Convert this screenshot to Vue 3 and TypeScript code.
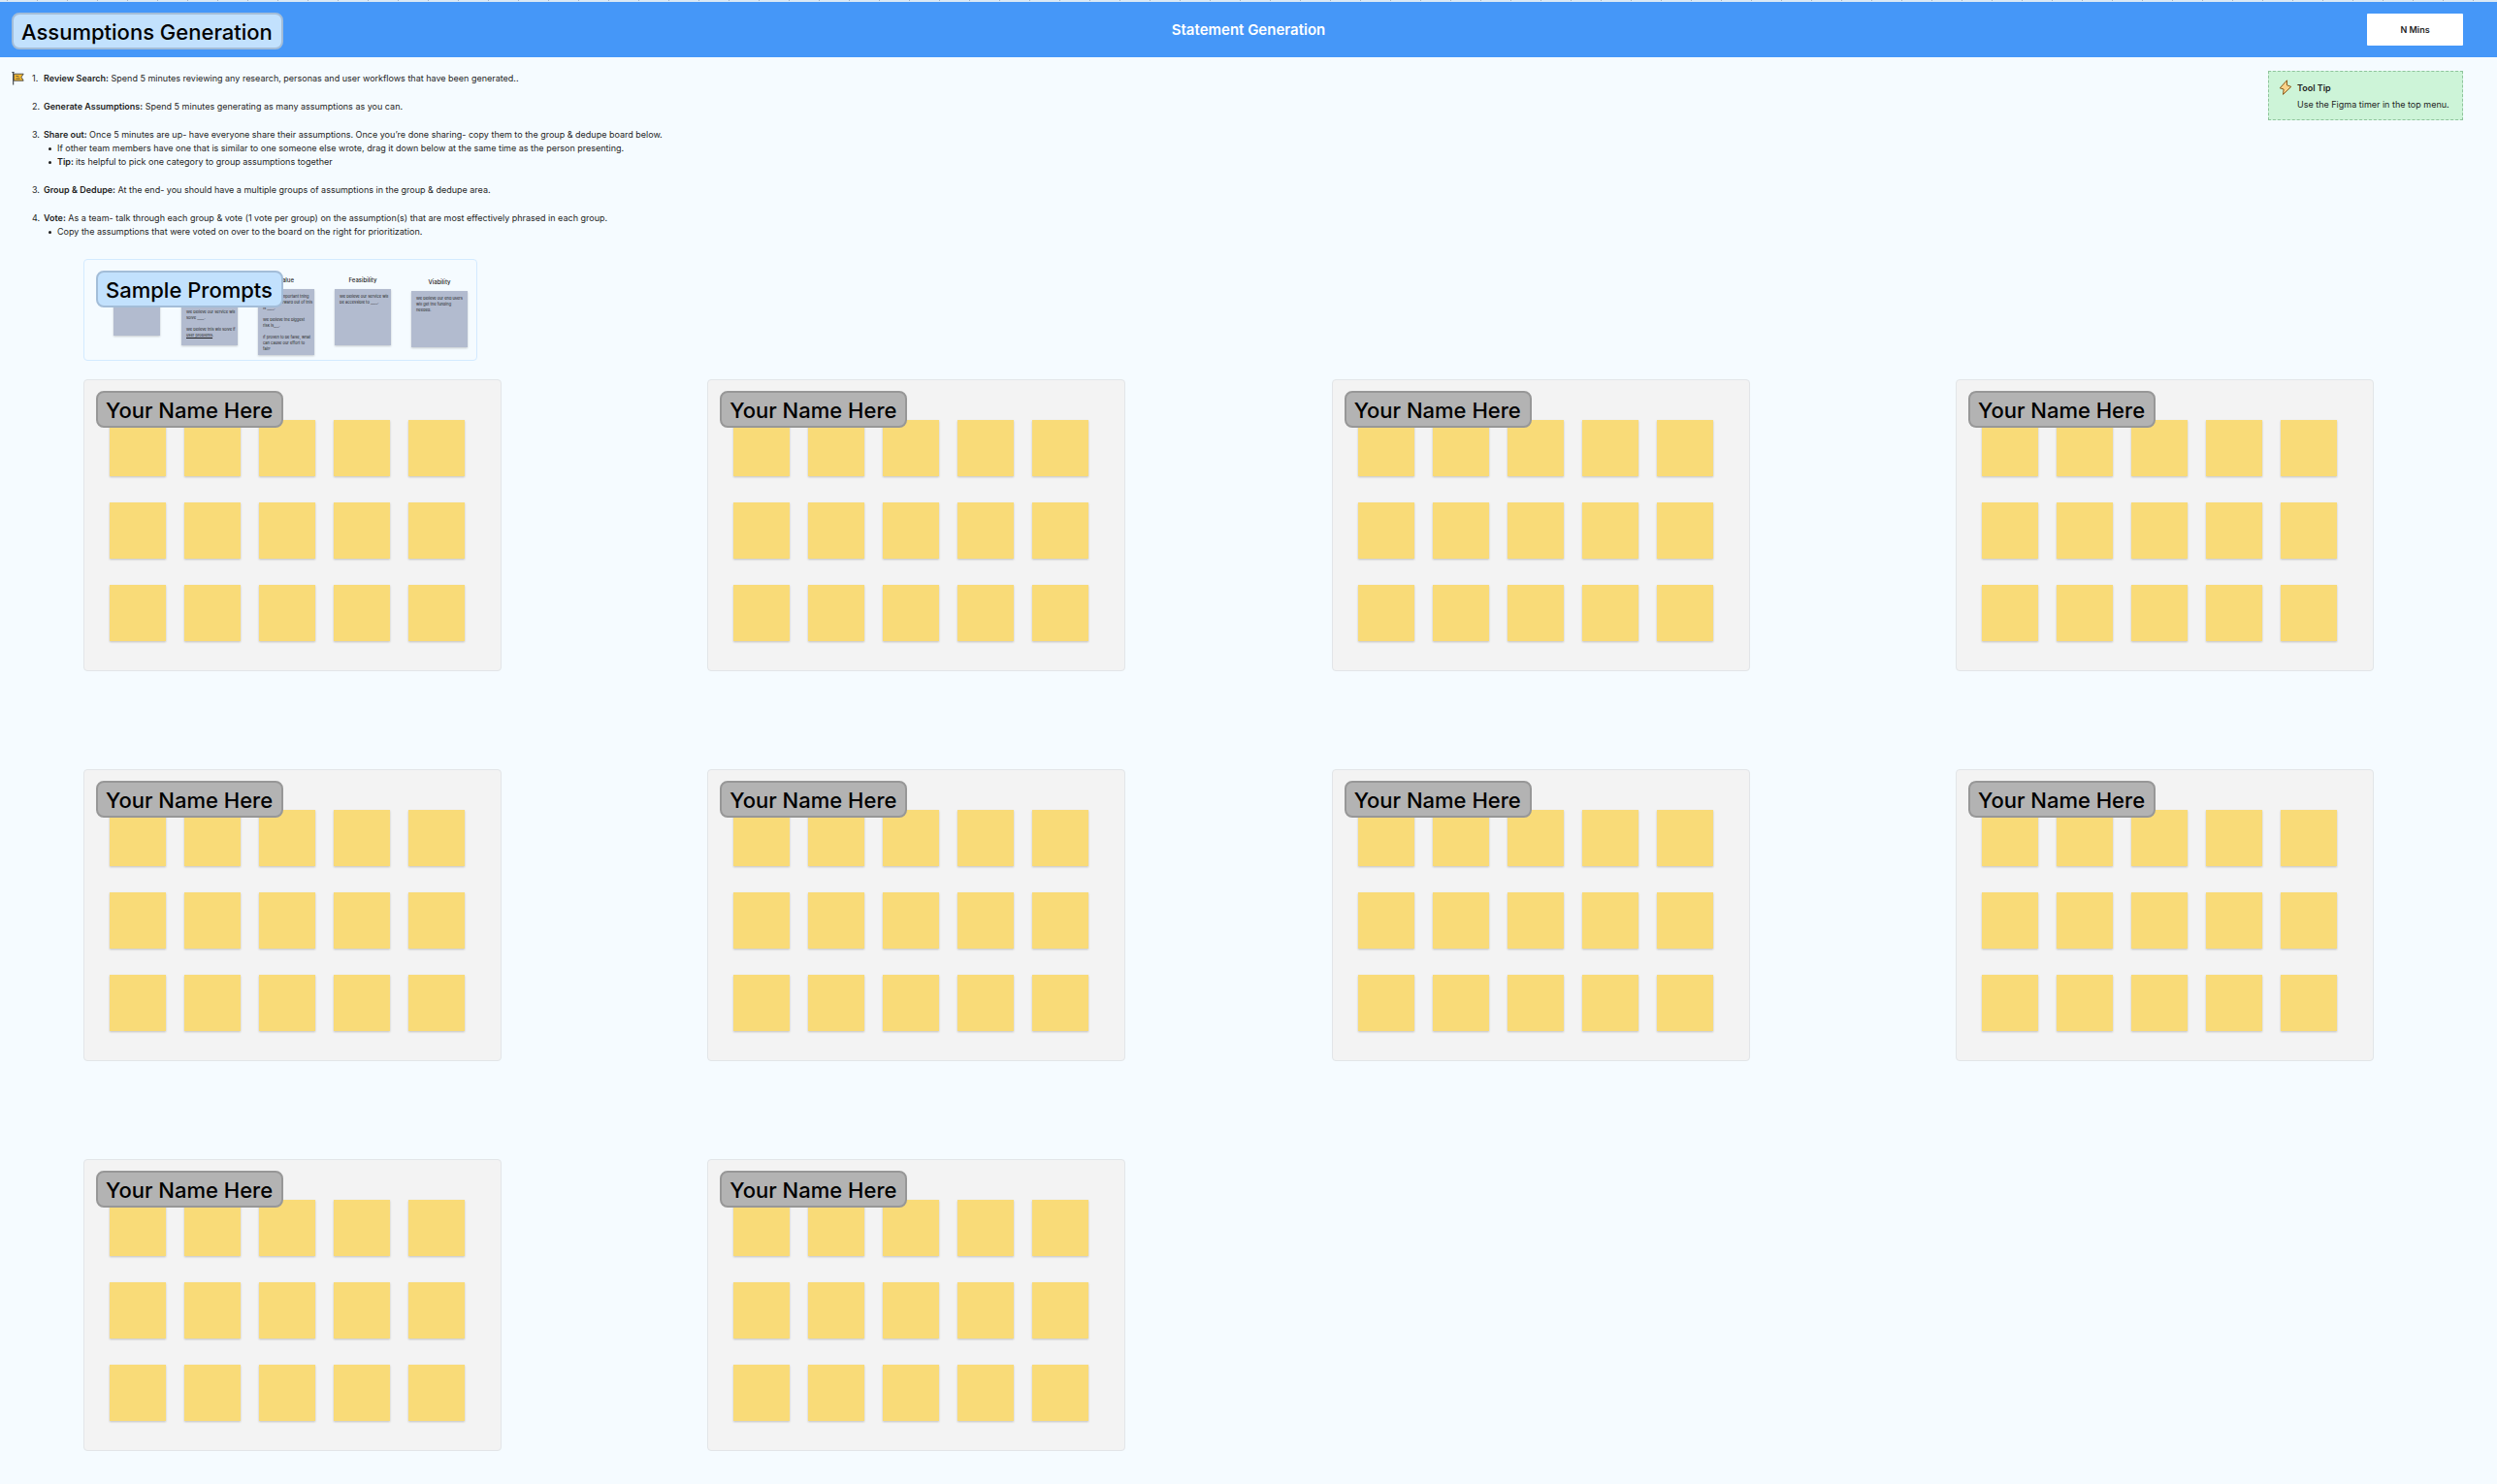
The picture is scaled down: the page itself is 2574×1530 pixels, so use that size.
<script setup lang="ts">
interface Instruction {
  marker: string
  title: string
  text: string
  points: { lead?: string; text: string }[]
}

interface Prompt {
  key: string
  label: string
  lines: string[]
  underlined?: string
}

const instructions: Instruction[] = [
  {
    marker: '1.',
    title: 'Review Search:',
    text: 'Spend 5 minutes reviewing any research, personas and user workflows that have been generated..',
    points: [],
  },
  {
    marker: '2.',
    title: 'Generate Assumptions:',
    text: 'Spend 5 minutes generating as many assumptions as you can.',
    points: [],
  },
  {
    marker: '3.',
    title: 'Share out:',
    text: 'Once 5 minutes are up- have everyone share their assumptions. Once you’re done sharing- copy them to the group & dedupe board below.',
    points: [
      {
        text: 'If other team members have one that is similar to one someone else wrote, drag it down below at the same time as the person presenting.',
      },
      { lead: 'Tip:', text: 'its helpful to pick one category to group assumptions together' },
    ],
  },
  {
    marker: '3.',
    title: 'Group & Dedupe:',
    text: 'At the end- you should have a multiple groups of assumptions in the group & dedupe area.',
    points: [],
  },
  {
    marker: '4.',
    title: 'Vote:',
    text: 'As a team- talk through each group & vote (1 vote per group) on the assumption(s) that are most effectively phrased in each group.',
    points: [
      { text: 'Copy the assumptions that were voted on over to the board on the right for prioritization.' },
    ],
  },
]

const prompts: Prompt[] = [
  { key: 'small', label: '', lines: [] },
  {
    key: 'solve',
    label: '',
    lines: ['We believe our service will', 'solve ____.', '', 'We believe this will solve if'],
    underlined: 'user problems',
  },
  {
    key: 'value',
    label: 'Value',
    lines: [
      'The most important thing',
      'to move forward out of this',
      'is ____.',
      '',
      'We believe the biggest',
      'risk is___.',
      '',
      'If proven to be false, what',
      'can cause our effort to',
      'fail?',
    ],
  },
  {
    key: 'feasibility',
    label: 'Feasibility',
    lines: ['We believe our service will', 'be accessible to ____.'],
  },
  {
    key: 'viability',
    label: 'Viability',
    lines: ['We believe our end users', 'will get the funding', 'needed.'],
  },
]

const boardCount = 10
const notesPerBoard = 15
</script>

<template>
  <div class="canvas">
    <header class="bar">
      <h1 class="chip chip-blue">Assumptions Generation</h1>
      <h2 class="bar-title">Statement Generation</h2>
      <button type="button" class="timer">N Mins</button>
    </header>

    <section class="intro">
      <svg class="flag" viewBox="0 0 12 14" aria-hidden="true">
        <path d="M2 3h9.300l-2 3 2 3.500H2z" fill="#f6b92f" stroke="#3a3d42" stroke-width=".8" />
        <path d="M1.500 1v12.500" stroke="#3a3d42" stroke-width="1" />
        <path d="M0 1.500h2.500M4 5l3 .5M4 7.500h4" stroke="#3a3d42" stroke-width=".7" fill="none" />
      </svg>
      <ol class="steps">
        <li v-for="(step, i) in instructions" :key="i" class="step">
          <span>{{ step.marker }}</span>
          <div>
            <p><strong>{{ step.title }}</strong> {{ step.text }}</p>
            <ul v-if="step.points.length" class="points">
              <li v-for="(point, j) in step.points" :key="j">
                <strong v-if="point.lead">{{ point.lead }}&nbsp;</strong>{{ point.text }}
              </li>
            </ul>
          </div>
        </li>
      </ol>
      <aside class="tip">
        <svg class="bolt" viewBox="0 0 14 16" aria-hidden="true">
          <path
            d="M8.500 .8 1.200 8.800l3.900 1.200L4.500 15.400l8.300-8-4.300-1.600z"
            fill="#fbd38a"
            stroke="#8a5a1c"
            stroke-width="1"
            stroke-linejoin="round"
          />
        </svg>
        <div>
          <h3>Tool Tip</h3>
          <p>Use the Figma timer in the top menu.</p>
        </div>
      </aside>
    </section>

    <section class="prompts">
      <h2 class="chip chip-blue chip-over">Sample Prompts</h2>
      <div v-for="prompt in prompts" :key="prompt.key" class="prompt" :class="prompt.key">
        <h3>{{ prompt.label }}</h3>
        <div class="prompt-note">
          <p v-for="(line, i) in prompt.lines" :key="i">{{ line }}</p>
          <p v-if="prompt.underlined"><u>{{ prompt.underlined }}</u>.</p>
        </div>
      </div>
    </section>

    <main class="boards">
      <section v-for="b in boardCount" :key="b" class="board">
        <h2 class="chip chip-gray chip-over">Your Name Here</h2>
        <div v-for="n in notesPerBoard" :key="n" class="note"></div>
      </section>
    </main>
  </div>
</template>

<style>
body {
  margin: 0;
  background: #f5fbff;
}
</style>

<style scoped>
.canvas {
  font-family: Inter, 'Liberation Sans', sans-serif;
  font-size: 9px;
  line-height: 14px;
  color: #1e1e1e;
  background: #f5fbff;
  padding-bottom: 35px;
}

h1,
h2,
h3,
p,
ol,
ul {
  margin: 0;
  padding: 0;
  list-style: none;
}

.chip {
  box-sizing: border-box;
  height: 38px;
  padding: 0 9px 0 8px;
  border: 2px solid;
  border-radius: 8px;
  font-size: 22px;
  font-weight: 500;
  line-height: 36px;
  white-space: nowrap;
  color: #000;
}

.chip-blue {
  background: #c2e1fd;
  border-color: #a3bdd8;
}

.chip-gray {
  background: #b3b3b3;
  border-color: #979797;
}

.chip-over {
  position: absolute;
  top: 11px;
  left: 12px;
}

.bar {
  display: grid;
  grid-template-columns: 1fr auto 1fr;
  align-items: center;
  height: 57px;
  padding: 2px 35px 0;
  background:
    repeating-linear-gradient(90deg, transparent 0 7px, #a9b4c0 7px 8px, transparent 8px 31px) top / 100% 1px no-repeat,
    linear-gradient(#dbe9f5 0 2px, #4597f8 2px);
}

.bar .chip {
  justify-self: start;
  margin: 3px 0 0 -23px;
}

.bar-title {
  font-size: 15px;
  font-weight: 600;
  line-height: 20px;
  color: #fff;
}

.timer {
  justify-self: end;
  width: 99px;
  height: 33px;
  border: 0;
  border-radius: 1px;
  background: #fff;
  color: #1e1e1e;
  font: 600 9px/14px Inter, sans-serif;
}

.intro {
  display: flex;
  align-items: flex-start;
  padding: 14px 35px 0 12px;
}

.flag {
  flex: none;
  width: 13px;
  height: 15px;
  margin-right: 8px;
}

.steps {
  flex: 1;
  display: flex;
  flex-direction: column;
  gap: 15px;
  padding-top: 1px;
}

.step {
  display: grid;
  grid-template-columns: 12px 1fr;
}

strong,
.tip h3 {
  font-weight: 600;
}

.points {
  padding-left: 14px;
}

.points li {
  position: relative;
}

.points li::before {
  content: '';
  position: absolute;
  left: -9px;
  top: 6px;
  width: 3px;
  height: 3px;
  border-radius: 50%;
  background: #1e1e1e;
}

.tip {
  display: flex;
  gap: 5px;
  box-sizing: border-box;
  width: 201px;
  height: 51px;
  padding: 8px 0 0 10px;
  border: 1px dashed #8fc49c;
  background: #cdf4d8;
  white-space: nowrap;
}

.tip h3 {
  font-size: 9px;
  line-height: 17px;
}

.tip p {
  line-height: 17px;
}

.bolt {
  flex: none;
  width: 14px;
  height: 16px;
}

.prompts {
  position: relative;
  display: flex;
  align-items: flex-start;
  box-sizing: border-box;
  width: 406px;
  height: 105px;
  margin: 21px 0 0 86px;
  padding: 16px 9px 0 30px;
  border: 1px solid #d3eaff;
  border-radius: 4px;
  gap: 21px;
}

.prompt {
  width: 58px;
}

.prompt h3 {
  height: 10px;
  margin-bottom: 4px;
  font-size: 6px;
  font-weight: 500;
  line-height: 10px;
  text-align: center;
}

.prompt-note {
  display: flex;
  flex-direction: column;
  box-sizing: border-box;
  min-height: 58px;
  padding: 5px;
  background: #b2bbcf;
  box-shadow: 0 1px 2px rgba(0, 0, 0, 0.2);
  font-size: 4px;
  line-height: 6px;
  white-space: nowrap;
}

.prompt-note p {
  min-height: 6px;
}

.small {
  width: 48px;
  margin-right: 1px;
}

.small .prompt-note {
  min-height: 48px;
}

.solve .prompt-note {
  justify-content: flex-end;
  padding-bottom: 7px;
}

.value .prompt-note {
  padding-bottom: 3px;
}

.viability {
  margin-top: 2px;
}

.boards {
  display: grid;
  grid-template-columns: repeat(4, 431px);
  justify-content: space-between;
  row-gap: 101px;
  padding: 19px 127px 0 86px;
}

.board {
  position: relative;
  display: grid;
  grid-template-columns: repeat(5, 58px);
  align-content: start;
  gap: 27px 19px;
  box-sizing: border-box;
  height: 301px;
  padding: 41px 26px;
  border: 1px solid #e2e5e8;
  border-radius: 4px;
  background: #f3f3f3;
}

.note {
  height: 58px;
  background: #f9db78;
  box-shadow: 0 1px 2px rgba(0, 0, 0, 0.2);
}
</style>
